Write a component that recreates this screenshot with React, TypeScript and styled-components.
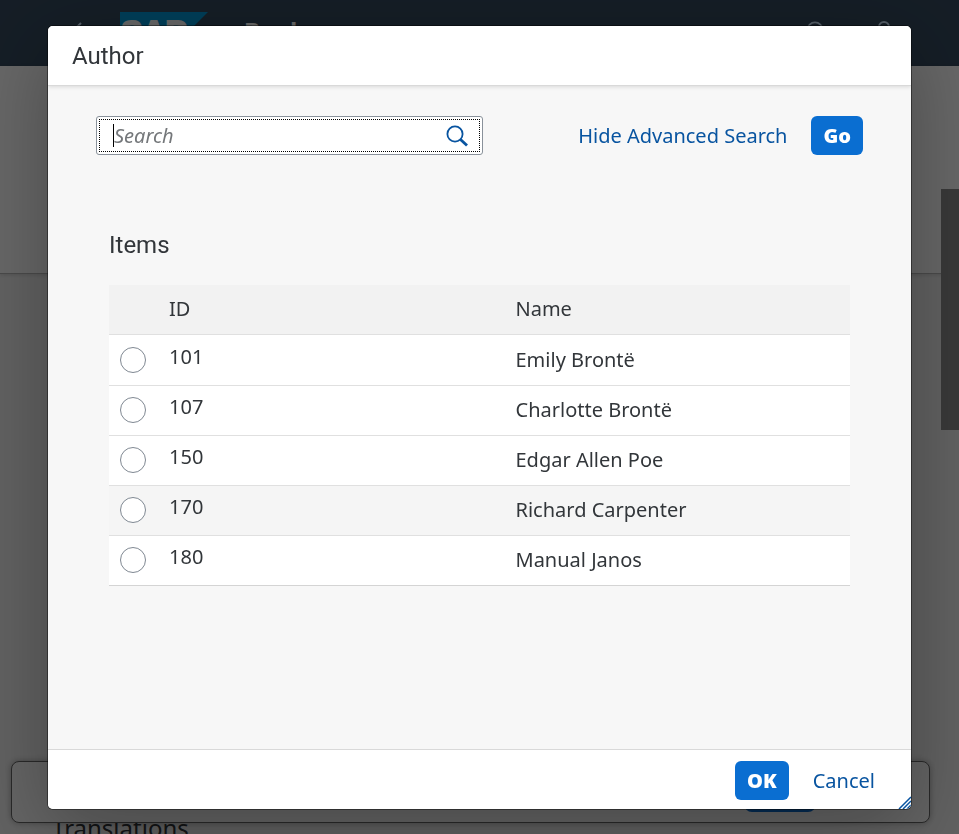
import React from "react";
import styled, { createGlobalStyle } from "styled-components";

const Global = createGlobalStyle`
  * { box-sizing: border-box; }
  html, body, #root { height: 100%; margin: 0; }
  body { overflow: hidden; font-family: "Noto Sans", "Open Sans", sans-serif; font-size: 20px; line-height: 24px; color: #32363a; }
  button, input { font: inherit; }
`;

const Page = styled.div`
  height: 100vh; display: flex; flex-direction: column; background: #f2f2f2;
`;
const ShellBar = styled.header`
  height: 66px; flex: none; background: #354a5f; color: #fff;
  display: flex; align-items: flex-start; gap: 36px; padding: 12px 64px 0 70px;
`;
const ShellButton = styled.button`
  border: 0; padding: 0; margin-top: 8px; background: none; color: #d1e8ff; display: flex;
`;
const ShellTitle = styled.h1`
  margin: 0; flex: 1; padding-top: 3px; font-size: 24px; line-height: 32px; font-weight: 700;
`;
const ShellActions = styled.div`display: flex; gap: 44px;`;
const ObjectHeader = styled.section`
  height: 208px; flex: none; background: #fff; border-bottom: 1px solid #b8b8b8;
  box-shadow: 0 1px 4px rgba(0,0,0,.15);
`;
const PageScroll = styled.div`
  position: absolute; right: 0; top: 189px; width: 18px; height: 241px; background: #8c8c8c;
`;
const FooterBar = styled.footer`
  position: absolute; left: 11px; right: 29px; bottom: 11px; height: 62px;
  display: flex; align-items: center; justify-content: flex-end; padding-right: 113px;
  background: #fafafa; border: 1px solid #666; border-radius: 8px; box-shadow: 0 0 6px rgba(0,0,0,.3);
`;
const SaveButton = styled.button`
  width: 72px; height: 39px; border: 0; border-radius: 8px; background: #0a6ed1;
`;
const NextHeading = styled.h2`
  position: absolute; left: 52px; top: 812px; margin: 0; font-size: 24px; line-height: 32px; font-weight: 400;
`;
const Backdrop = styled.div`
  position: fixed; inset: 0; display: flex; padding: 26px 48px 25px; background: rgba(0,0,0,.6);
`;
const Dialog = styled.section`
  position: relative; flex: 1; min-width: 0; display: flex; flex-direction: column; overflow: hidden;
  border-radius: 5px; background: #f7f7f7;
  box-shadow: 0 0 0 1px rgba(0,0,0,.42), 0 20px 80px rgba(0,0,0,.3);
`;
const DialogHeader = styled.header`
  height: 59px; flex: none; display: flex; align-items: center; padding: 0 24px; background: #fff;
  box-shadow: 0 0 0 1px #d9d9d9, 0 2px 4px rgba(0,0,0,.12); position: relative;
`;
const Title = styled.h2`
  margin: 0; font-family: Roboto, sans-serif; font-size: 24px; line-height: 32px; font-weight: 400;
`;
const Body = styled.div`flex: 1; padding: 31px 48px;`;
const FilterBar = styled.form`display: flex; align-items: center; gap: 12px;`;
const SearchBox = styled.div`
  width: 387px; height: 39px; display: flex; align-items: center; padding: 2px; background: #fff;
  border: 1px solid #89919a; border-radius: 3px;
`;
const SearchInner = styled.div`
  flex: 1; height: 33px; display: flex; align-items: center; border: 1px dotted #000; padding: 0 10px 0 13px;
`;
const Caret = styled.span`width: 1px; height: 23px; background: #000; flex: none;`;
const SearchInput = styled.input`
  flex: 1; min-width: 0; border: 0; padding: 0; outline: 0; background: none; color: #32363a;
  &::placeholder { color: #74777a; opacity: 1; font-style: italic; }
`;
const IconButton = styled.button`
  display: flex; padding: 0; border: 0; background: none; color: #0854a0;
`;
const Spacer = styled.span`flex: 1;`;
const Button = styled.button<{ $primary?: boolean }>`
  height: 39px; padding: 0 12px; border: 0; border-radius: 6px; white-space: nowrap;
  background: ${p => (p.$primary ? "#0a6ed1" : "transparent")};
  color: ${p => (p.$primary ? "#fff" : "#0854a0")};
  font-weight: ${p => (p.$primary ? 900 : 400)};
`;
const Items = styled.div`padding: 74px 13px 0;`;
const ItemsTitle = styled.h3`
  margin: 0 0 24px; font-family: Roboto, sans-serif; font-size: 24px; line-height: 32px; font-weight: 400;
`;
const Table = styled.table`
  width: 100%; border-collapse: separate; border-spacing: 0; table-layout: fixed; text-align: left;
`;
const SelectCol = styled.col`width: 48px;`;
const HeadCell = styled.th`
  height: 50px; padding: 0 12px 2px; font-weight: 400; background: #f2f2f2; border-bottom: 1px solid #e0e0e0;
`;
const Row = styled.tr<{ $hover?: boolean }>`
  height: 50px; background: ${p => (p.$hover ? "#f5f5f5" : "#fff")};
  &:first-child { height: 51px; }
  &:last-child > td { border-bottom-color: #d4d4d4; }
`;
const Cell = styled.td<{ $top?: boolean }>`
  padding: ${p => (p.$top ? "0 12px 7px" : "0 12px 1px")};
  border-bottom: 1px solid #e0e0e0;
`;
const RadioCell = styled(Cell)`padding: 0 0 1px 11px;`;
const Radio = styled.input`
  appearance: none; display: block; width: 26px; height: 26px; margin: 0;
  border: 1px solid #7f8892; border-radius: 50%; background: #fff;
  &:checked { box-shadow: inset 0 0 0 6px #fff; background: #0854a0; }
`;
const DialogFooter = styled.footer`
  height: 60px; flex: none; display: flex; align-items: flex-start; justify-content: flex-end; gap: 12px;
  padding: 11px 24px 0 0; background: #fff; border-top: 1px solid #d9d9d9;
`;
const ResizeGrip = styled.svg`position: absolute; right: 0; bottom: 0;`;

const authors = [
  { id: 101, name: "Emily Brontë" },
  { id: 107, name: "Charlotte Brontë" },
  { id: 150, name: "Edgar Allen Poe" },
  { id: 170, name: "Richard Carpenter" },
  { id: 180, name: "Manual Janos" },
];

const BackIcon = () => (
  <svg width="14" height="24" viewBox="0 0 14 24" fill="none" stroke="currentColor" strokeWidth="2"><path d="M11 3 2 12l9 9" /></svg>
);
const Logo = () => (
  <svg width="88" height="44" viewBox="0 0 88 44" aria-label="SAP">
    <path d="M0 0h88L44 44H0z" fill="#009bdc" />
    <text x="1" y="31" fontFamily="Liberation Sans, sans-serif" fontWeight="700" fontSize="32" fill="#fff" stroke="#fff" strokeWidth="2">SAP</text>
  </svg>
);
const SearchIcon = () => (
  <svg width="24" height="24" viewBox="0 0 24 24" fill="none" stroke="currentColor">
    <circle cx="10" cy="10" r="7.600" strokeWidth="1.800" /><path d="m15.500 15.500 6.500 6" strokeWidth="2.800" />
  </svg>
);
const PersonIcon = () => (
  <svg width="22" height="24" viewBox="0 0 22 24" fill="none" stroke="currentColor" strokeWidth="2">
    <circle cx="11" cy="7" r="5" /><path d="M2 23c0-12 18-12 18 0z" />
  </svg>
);

export default function App() {
  return (
    <>
      <Global />
      <Page>
        <ShellBar>
          <ShellButton aria-label="Back"><BackIcon /></ShellButton>
          <Logo />
          <ShellTitle>Books</ShellTitle>
          <ShellActions>
            <ShellButton aria-label="Search"><SearchIcon /></ShellButton>
            <ShellButton aria-label="Profile"><PersonIcon /></ShellButton>
          </ShellActions>
        </ShellBar>
        <ObjectHeader />
        <PageScroll />
        <NextHeading>Translations</NextHeading>
        <FooterBar><SaveButton aria-label="Save" /></FooterBar>
      </Page>
      <Backdrop>
        <Dialog role="dialog" aria-labelledby="dialog-title">
          <DialogHeader><Title id="dialog-title">Author</Title></DialogHeader>
          <Body>
            <FilterBar onSubmit={e => e.preventDefault()}>
              <SearchBox>
                <SearchInner>
                  <Caret />
                  <SearchInput aria-label="Search" placeholder="Search" />
                  <IconButton type="submit" aria-label="Run search"><SearchIcon /></IconButton>
                </SearchInner>
              </SearchBox>
              <Spacer />
              <Button type="button">Hide Advanced Search</Button>
              <Button type="submit" $primary>Go</Button>
            </FilterBar>
            <Items>
              <ItemsTitle id="items-title">Items</ItemsTitle>
              <Table aria-labelledby="items-title">
                <colgroup><SelectCol /><col /><col /></colgroup>
                <thead><tr><HeadCell /><HeadCell>ID</HeadCell><HeadCell>Name</HeadCell></tr></thead>
                <tbody>
                  {authors.map(a => (
                    <Row key={a.id} $hover={a.id === 170}>
                      <RadioCell><Radio type="radio" name="author" aria-label={a.name} /></RadioCell>
                      <Cell $top>{a.id}</Cell>
                      <Cell>{a.name}</Cell>
                    </Row>
                  ))}
                </tbody>
              </Table>
            </Items>
          </Body>
          <DialogFooter>
            <Button type="button" $primary>OK</Button>
            <Button type="button">Cancel</Button>
          </DialogFooter>
          <ResizeGrip width="13" height="13" viewBox="0 0 13 13" stroke="#0854a0" strokeWidth="1.500">
            <path d="M1 13 13 1M5 13l8-8M9 13l4-4" />
          </ResizeGrip>
        </Dialog>
      </Backdrop>
    </>
  );
}
